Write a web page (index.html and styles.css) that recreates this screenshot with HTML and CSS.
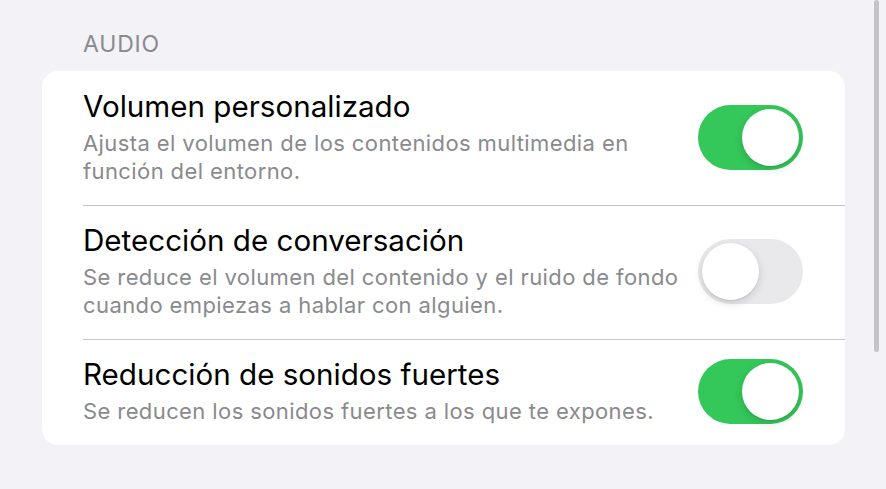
FILE: index.html
```html
<!DOCTYPE html>
<html lang="es">
<head>
  <meta charset="UTF-8">
  <title>Audio</title>
  <link rel="stylesheet" href="styles.css">
</head>
<body>

<div class="page">
  <h3 class="section-title">AUDIO</h3>

  <div class="card">
    <div class="row">
      <div class="row-text">
        <div class="row-title">Volumen personalizado</div>
        <div class="row-sub">Ajusta el volumen de los contenidos multimedia en<br>función del entorno.</div>
      </div>
      <span class="switch on"><span class="knob"></span></span>
    </div>

    <div class="row">
      <div class="row-text">
        <div class="row-title">Detección de conversación</div>
        <div class="row-sub">Se reduce el volumen del contenido y el ruido de fondo<br>cuando empiezas a hablar con alguien.</div>
      </div>
      <span class="switch"><span class="knob"></span></span>
    </div>

    <div class="row">
      <div class="row-text">
        <div class="row-title">Reducción de sonidos fuertes</div>
        <div class="row-sub">Se reducen los sonidos fuertes a los que te expones.</div>
      </div>
      <span class="switch on"><span class="knob"></span></span>
    </div>
  </div>
</div>

<div class="scrollbar"></div>

</body>
</html>
```

FILE: styles.css
```css
html, body { margin: 0; height: 100%; }
body { font-family: Inter, "Noto Sans", sans-serif; background: #f2f2f7; color: #000; overflow: hidden; }
.page { padding: 30px 41px 0 42px; }
.section-title { margin: 0 0 13px 41px; font-size: 23px; font-weight: 400; color: #8a8a8e; line-height: 28px; letter-spacing: 0.8px; }
.card { background: #fff; border-radius: 16px; overflow: hidden; }
.row { display: flex; align-items: center; padding: 19px 42px 20px 41px; position: relative; }
.row + .row::before { content: ""; position: absolute; top: 0; left: 41px; right: 0; border-top: 1px solid #c6c6c8; }
.row-text { flex: 1; }
.row-title { font-size: 29.6px; line-height: 32px; }
.row-sub { margin-top: 7px; font-size: 22px; line-height: 28px; color: #8a8a8e; letter-spacing: 0.4px; }
.switch { width: 105px; height: 65px; border-radius: 33px; background: #e9e9eb; position: relative; flex: none; }
.switch.on { background: #34c759; }
.knob { position: absolute; top: 4px; left: 4px; width: 57px; height: 57px; border-radius: 50%; background: #fff; box-shadow: 0 3px 8px rgba(0,0,0,0.15), 0 1px 1px rgba(0,0,0,0.08); }
.switch.on .knob { left: 44px; }
.scrollbar { position: absolute; top: 0; left: 874px; width: 5px; height: 352px; border-radius: 3px; background: #c4c4c8; }
```
